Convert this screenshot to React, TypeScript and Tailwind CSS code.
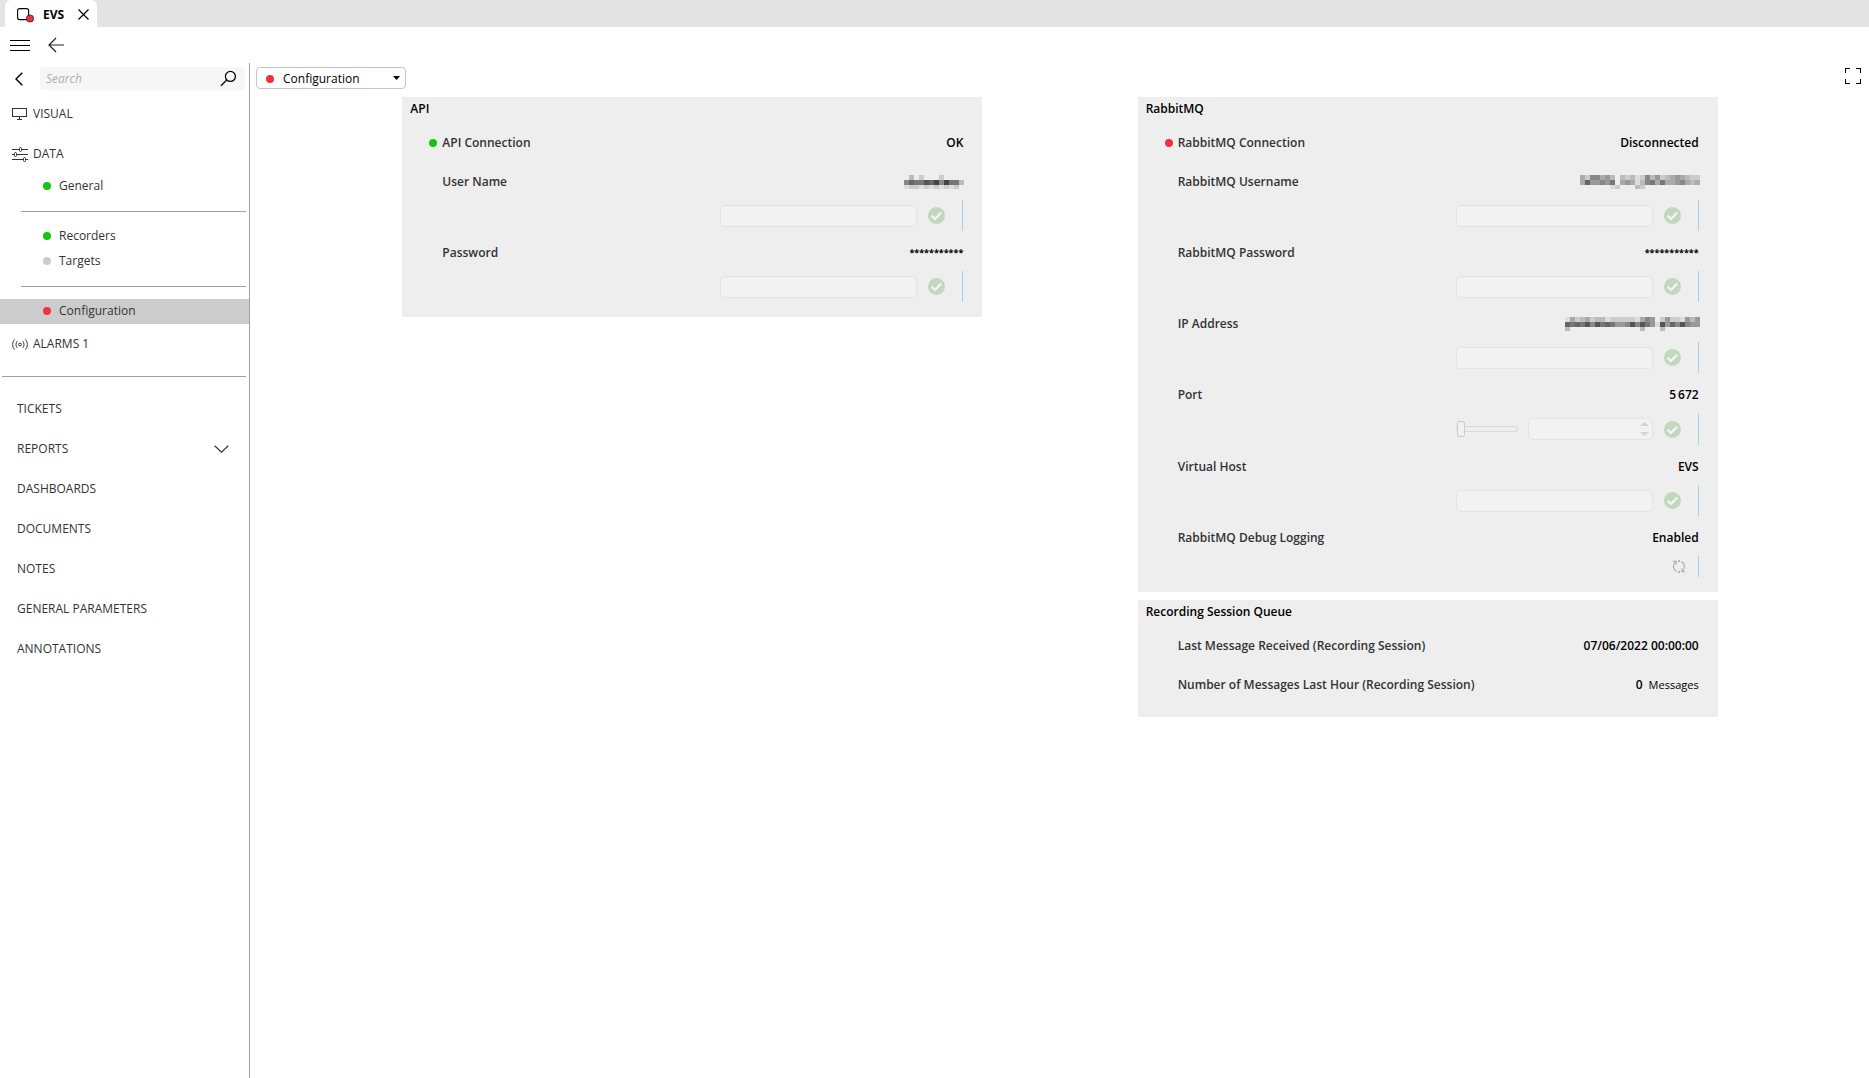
import { useState } from "react";

const dotColors = {
  ok: "bg-[#16c60c]",
  idle: "bg-[#cccccc]",
  error: "bg-[#f4303f]",
};

type Status = keyof typeof dotColors;

type Param = {
  id: string;
  label: string;
  value?: string;
  unit?: string;
  hidden?: string[];
  status?: Status;
  control?: "text" | "password" | "number" | "toggle";
};

// Hidden values are shown as shaded cells, one hex digit for each (e = empty)
const apiParams: Param[] = [
  { id: "api-connection", label: "API Connection", value: "OK", status: "ok" },
  {
    id: "api-user",
    label: "User Name",
    hidden: ["ebeceeeceeee", "86775648477b", "dccdcdcdcdce"],
    control: "text",
  },
  { id: "api-password", label: "Password", value: "***********", control: "password" },
];

const rabbitParams: Param[] = [
  { id: "mq-connection", label: "RabbitMQ Connection", value: "Disconnected", status: "error" },
  {
    id: "mq-user",
    label: "RabbitMQ Username",
    hidden: ["ac88a9bebcbdc8b9cba9abcc", "a699897ea9adb87a7aa98aba", "eeeeeedceeebceeeeeeeeeee"],
    control: "text",
  },
  { id: "mq-password", label: "RabbitMQ Password", value: "***********", control: "password" },
  {
    id: "mq-ip",
    label: "IP Address",
    hidden: ["edacbacbbdcccccda89ec9ccd9b9", "e676758576799858579d59685899", "ebeeeeeeeeeeeeeebeeebeeeeeee"],
    control: "text",
  },
  { id: "mq-port", label: "Port", value: "5\u2009672", control: "number" },
  { id: "mq-host", label: "Virtual Host", value: "EVS", control: "text" },
  { id: "mq-debug", label: "RabbitMQ Debug Logging", value: "Enabled", control: "toggle" },
];

const queueParams: Param[] = [
  { id: "q-last", label: "Last Message Received (Recording Session)", value: "07/06/2022 00:00:00" },
  { id: "q-count", label: "Number of Messages Last Hour (Recording Session)", value: "0", unit: "Messages" },
];

const pages = ["TICKETS", "REPORTS", "DASHBOARDS", "DOCUMENTS", "NOTES", "GENERAL PARAMETERS", "ANNOTATIONS"];

function Dot({ status }: { status: Status }) {
  return <span className={`w-2 h-2 rounded-full shrink-0 ${dotColors[status]}`} />;
}

function Masked({ rows }: { rows: string[] }) {
  const width = rows[0].length * 5;
  return (
    <svg
      width={width}
      height="14"
      viewBox={`0 0 ${width} 14`}
      shapeRendering="crispEdges"
      aria-label="Hidden value"
      className="-mr-px"
    >
      {rows.map((row, y) =>
        [...row].map((shade, x) =>
          shade === "e" ? null : (
            <rect key={`${y}-${x}`} x={x * 5} y={y * 5} width="5" height="5" fill={`#${shade}${shade}${shade}`} />
          )
        )
      )}
    </svg>
  );
}

function ApplyButton() {
  return (
    <button type="button" aria-label="Apply" className="shrink-0">
      <svg width="17" height="17" viewBox="0 0 17 17" fill="none">
        <circle cx="8.5" cy="8.5" r="8.5" fill="#c1d8be" />
        <path d="M3.6 8.6l3.4 3.4 6.2-6.6" stroke="#f4f6f4" strokeWidth="2.2" />
      </svg>
    </button>
  );
}

const fieldClass = "h-[22px] rounded-sm border border-[#e3e3e3] bg-[#f2f2f2] px-1 text-xs outline-none";

function Control({ id, label, control }: Param) {
  if (control === "toggle") {
    return (
      <div className="mt-1.5 flex h-[21px] items-center justify-end gap-3">
        <button type="button" id={id} aria-label={label}>
          <svg width="14" height="13" viewBox="0 0 14 13" fill="none" stroke="#b4b4b4" strokeWidth="1.2">
            <path d="M4.6 11.4C1 9.6.6 5.4 3 2.6M9.4 1.6c3.6 1.8 4 6 1.6 8.8" />
            <path d="M6 1h2M6 12h2" strokeWidth="2" />
            <path d="M0 .8h4.8v4.4L3.2 3zM14 12.2H9.2V7.8l1.6 2.2z" fill="#b4b4b4" stroke="none" />
          </svg>
        </button>
        <span className="w-px self-stretch bg-[#a9d1e8]" />
      </div>
    );
  }

  return (
    <div className={`mt-1.5 flex items-center justify-end gap-[17px] ${control === "number" ? "h-8" : "h-[31px]"}`}>
      <div className="flex items-center gap-[11px]">
        {control === "number" ? (
          <div className="flex items-center gap-2.5">
            <input
              type="range"
              defaultValue={0}
              aria-label={`${label} slider`}
              className="h-4 w-[62px] appearance-none bg-transparent
                         [&::-webkit-slider-runnable-track]:h-1.5 [&::-webkit-slider-runnable-track]:rounded-sm
                         [&::-webkit-slider-runnable-track]:border [&::-webkit-slider-runnable-track]:border-[#d8d8d8]
                         [&::-webkit-slider-thumb]:-mt-1.5 [&::-webkit-slider-thumb]:h-4 [&::-webkit-slider-thumb]:w-2
                         [&::-webkit-slider-thumb]:appearance-none [&::-webkit-slider-thumb]:rounded-xs
                         [&::-webkit-slider-thumb]:border [&::-webkit-slider-thumb]:border-[#cccccc]
                         [&::-webkit-slider-thumb]:bg-[#f0f0f0]"
            />
            <div className="relative flex">
              <input
                id={id}
                type="number"
                className={`w-[125px] [&::-webkit-inner-spin-button]:appearance-none ${fieldClass}`}
              />
              <svg
                width="9"
                height="14"
                viewBox="0 0 9 14"
                fill="#cdd1e6"
                className="pointer-events-none absolute right-1 top-1"
              >
                <path d="M4.5 0L9 4H0zM4.5 14L9 10H0z" />
              </svg>
            </div>
          </div>
        ) : (
          <input id={id} type={control} className={`w-[197px] ${fieldClass}`} />
        )}
        <ApplyButton />
      </div>
      <span className="w-px self-stretch bg-[#a9d1e8]" />
    </div>
  );
}

function ParamRow(param: Param) {
  const { id, label, value, unit, hidden, status, control } = param;
  return (
    <div className={control ? "mb-2.5" : "mb-[15px]"}>
      <div className="flex h-6 items-center">
        <div className="flex w-10 shrink-0 justify-end pr-[5px]">{status && <Dot status={status} />}</div>
        {control ? (
          <label htmlFor={id} className="font-semibold text-[#333333]">{label}</label>
        ) : (
          <span className="font-semibold text-[#333333]">{label}</span>
        )}
        <div className="ml-auto flex items-center gap-1.5">
          {hidden ? (
            <Masked rows={hidden} />
          ) : (
            <span className={control === "password" ? "text-[9px] font-bold" : "font-semibold"}>{value}</span>
          )}
          {unit && <span className="text-[11px]">{unit}</span>}
        </div>
      </div>
      {control && <Control {...param} />}
    </div>
  );
}

function Card({ title, params }: { title: string; params: Param[] }) {
  return (
    <section className="bg-[#eeeeee] pb-[5px] pr-[19px]">
      <h2 className="mb-2.5 flex h-6 items-center pl-2 font-semibold">{title}</h2>
      {params.map((param) => (
        <ParamRow key={param.id} {...param} />
      ))}
    </section>
  );
}

function SubItem({ label, status, active }: { label: string; status: Status; active?: boolean }) {
  return (
    <a href="#" className={`flex h-[25px] items-center gap-2 pb-px pl-[43px] ${active ? "bg-[#cccccc]" : ""}`}>
      <Dot status={status} />
      {label}
    </a>
  );
}

function Sidebar() {
  const [query, setQuery] = useState("");

  return (
    <nav className="w-[250px] shrink-0 border-r border-[#a0a0a0] pt-1 text-[#333333]">
      <div className="mb-1 flex items-center pr-1">
        <button type="button" aria-label="Collapse" className="flex w-10 pl-[15px]">
          <svg width="8" height="14" viewBox="0 0 8 14" fill="none" stroke="#000" strokeWidth="1.4">
            <path d="M7.3.7L1 7l6.3 6.3" />
          </svg>
        </button>
        <div className="flex h-[23px] flex-1 items-center rounded-sm bg-[#f6f6f6] pl-1.5 pr-2">
          <input
            type="text"
            aria-label="Search"
            placeholder="Search"
            value={query}
            onChange={(e) => setQuery(e.target.value)}
            className="min-w-0 flex-1 bg-transparent outline-none placeholder:italic placeholder:text-[#b0b0b0]"
          />
          <button type="button" aria-label="Run search">
            <svg width="17" height="17" viewBox="0 0 17 17" fill="none" stroke="#000" strokeWidth="1.3">
              <circle cx="10.4" cy="6.4" r="5" />
              <path d="M6.8 9.9L1 15.7" />
            </svg>
          </button>
        </div>
      </div>

      <a href="#" className="flex h-10 items-center gap-1.5 pl-3">
        <svg width="15" height="12" viewBox="0 0 15 12" fill="none" stroke="#333" shapeRendering="crispEdges">
          <path d="M.5.5h14v8H.5zM7.5 8.5v3M5 11.5h5" />
        </svg>
        VISUAL
      </a>
      <a href="#" className="flex h-10 items-center gap-[5px] pl-3">
        <svg width="16" height="15" viewBox="0 0 16 15" fill="#fff" stroke="#333">
          <path d="M0 2.5h16M0 7.5h16M0 12.5h16" />
          <rect x="7.5" y=".5" width="2" height="4" rx="1" />
          <rect x="2.5" y="5.5" width="2" height="4" rx="1" />
          <rect x="11.5" y="10.5" width="2" height="4" rx="1" />
        </svg>
        DATA
      </a>

      <SubItem label="General" status="ok" />
      <hr className="my-3 ml-[21px] mr-[3px] border-[#a0a0a0]" />
      <SubItem label="Recorders" status="ok" />
      <SubItem label="Targets" status="idle" />
      <hr className="my-3 ml-[21px] mr-[3px] border-[#a0a0a0]" />
      <SubItem label="Configuration" status="error" active />

      <a href="#" className="flex h-10 items-center gap-[5px] pl-3">
        <svg width="16" height="11" viewBox="0 0 16 11" fill="none" stroke="#333">
          <circle cx="8" cy="5.5" r="1.4" />
          <path d="M5.2 2.2c-1.6 1.7-1.6 4.9 0 6.6M10.8 2.2c1.6 1.7 1.6 4.9 0 6.6" />
          <path d="M2.6.3C0 3 0 8 2.6 10.7M13.4.3C16 3 16 8 13.4 10.7" />
        </svg>
        ALARMS 1
      </a>
      <hr className="my-3 ml-0.5 mr-[3px] border-[#a0a0a0]" />

      {pages.map((page) => (
        <a key={page} href="#" className="flex h-10 items-center justify-between pl-[17px] pr-5">
          {page}
          {page === "REPORTS" && (
            <svg width="15" height="8" viewBox="0 0 15 8" fill="none" stroke="#333" strokeWidth="1.2">
              <path d="M.7.7l6.8 6.4L14.3.7" />
            </svg>
          )}
        </a>
      ))}
    </nav>
  );
}

export default function App() {
  return (
    <div className="flex min-h-screen flex-col bg-white font-['Open_Sans','Noto_Sans',sans-serif] text-xs text-black">
      {/* Tabs */}
      <header className="flex h-[27px] bg-[#e4e4e4] pl-[5px]">
        <div className="flex items-center rounded-t-md bg-white pl-3 pr-2 pt-0.5">
          <svg width="18" height="16" viewBox="0 0 18 16" fill="none" className="mr-2">
            <rect x=".6" y="1.6" width="11" height="11" rx="2" stroke="#000" strokeWidth="1.1" />
            <circle cx="13" cy="11.5" r="3.6" fill="#f4303f" stroke="#222" strokeWidth=".8" />
          </svg>
          <span className="mr-3.5 font-bold">EVS</span>
          <button type="button" aria-label="Close tab">
            <svg width="11" height="11" viewBox="0 0 11 11" stroke="#000" strokeWidth="1.2">
              <path d="M.5.5l10 10M10.5.5l-10 10" />
            </svg>
          </button>
        </div>
      </header>

      {/* Toolbar */}
      <div className="flex h-9 items-start gap-[18px] pl-2.5 pt-2.5">
        <button type="button" aria-label="Menu">
          <svg width="20" height="16" viewBox="0 0 20 16" stroke="#000" shapeRendering="crispEdges">
            <path d="M0 3.5h20M0 8.5h20M0 13.5h20" />
          </svg>
        </button>
        <button type="button" aria-label="Back">
          <svg width="17" height="16" viewBox="0 0 17 16" fill="none" stroke="#222" strokeWidth="1.2">
            <path d="M8 1L1 8l7 7M1 8h15" />
          </svg>
        </button>
      </div>

      <div className="flex flex-1">
        <Sidebar />

        <main className="min-w-0 flex-1">
          <div className="mb-2 flex items-start justify-between pl-1.5 pr-2 pt-1">
            <div className="relative flex w-[150px]">
              <select
                aria-label="Page"
                className="h-[22px] w-full appearance-none rounded-sm border border-[#c4c4c4] bg-white pl-[26px] pt-px outline-none"
              >
                <option>Configuration</option>
              </select>
              <span className="pointer-events-none absolute inset-y-0 left-2.5 flex items-center pt-px">
                <Dot status="error" />
              </span>
              <svg
                width="7"
                height="4"
                viewBox="0 0 7 4"
                className="pointer-events-none absolute right-1.5 top-[9px]"
              >
                <path d="M0 0h7L3.5 4z" />
              </svg>
            </div>
            <button type="button" aria-label="Full screen" className="pt-px">
              <svg width="16" height="16" viewBox="0 0 16 16" fill="none" stroke="#000" shapeRendering="crispEdges">
                <path d="M.5 5V.5H5M11 .5h4.5V5M15.5 11v4.5H11M5 15.5H.5V11" />
              </svg>
            </button>
          </div>

          <div className="flex items-start justify-evenly gap-1 pl-px">
            <div className="w-[580px]">
              <Card title="API" params={apiParams} />
            </div>
            <div className="flex w-[580px] flex-col gap-2">
              <Card title="RabbitMQ" params={rabbitParams} />
              <Card title="Recording Session Queue" params={queueParams} />
            </div>
          </div>
        </main>
      </div>
    </div>
  );
}
